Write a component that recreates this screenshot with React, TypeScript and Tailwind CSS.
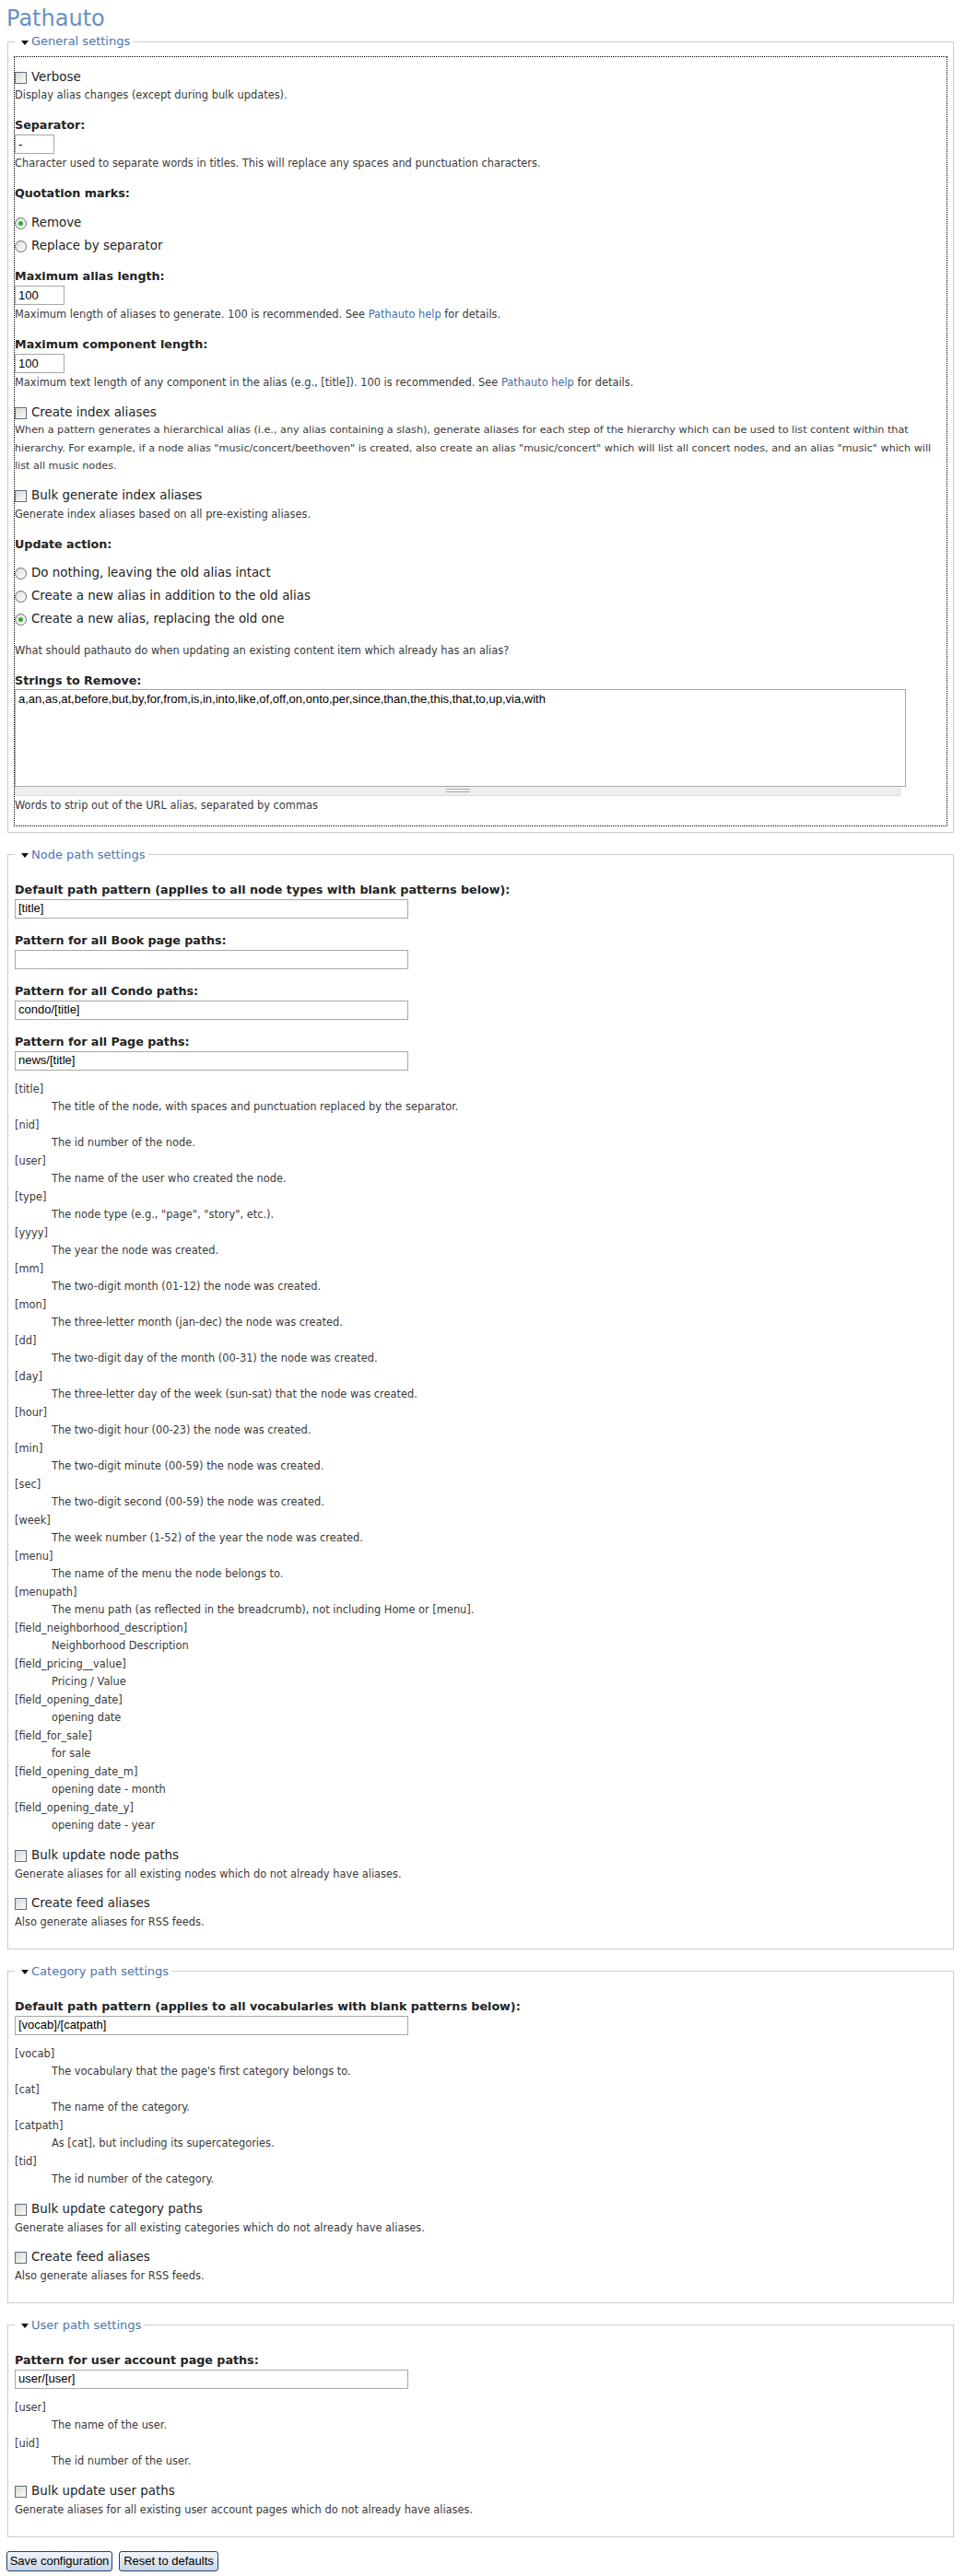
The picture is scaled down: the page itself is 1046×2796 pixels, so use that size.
import React from "react";

const BODY = "font-['DejaVu_Sans',Verdana,sans-serif]";
const ARIAL = "font-['Liberation_Sans',Arial,sans-serif]";

type Token = [string, string];

const nodeTokens: Token[] = [
  ["[title]", "The title of the node, with spaces and punctuation replaced by the separator."],
  ["[nid]", "The id number of the node."],
  ["[user]", "The name of the user who created the node."],
  ["[type]", 'The node type (e.g., "page", "story", etc.).'],
  ["[yyyy]", "The year the node was created."],
  ["[mm]", "The two-digit month (01-12) the node was created."],
  ["[mon]", "The three-letter month (jan-dec) the node was created."],
  ["[dd]", "The two-digit day of the month (00-31) the node was created."],
  ["[day]", "The three-letter day of the week (sun-sat) that the node was created."],
  ["[hour]", "The two-digit hour (00-23) the node was created."],
  ["[min]", "The two-digit minute (00-59) the node was created."],
  ["[sec]", "The two-digit second (00-59) the node was created."],
  ["[week]", "The week number (1-52) of the year the node was created."],
  ["[menu]", "The name of the menu the node belongs to."],
  ["[menupath]", "The menu path (as reflected in the breadcrumb), not including Home or [menu]."],
  ["[field_neighborhood_description]", "Neighborhood Description"],
  ["[field_pricing__value]", "Pricing / Value"],
  ["[field_opening_date]", "opening date"],
  ["[field_for_sale]", "for sale"],
  ["[field_opening_date_m]", "opening date - month"],
  ["[field_opening_date_y]", "opening date - year"],
];

const catTokens: Token[] = [
  ["[vocab]", "The vocabulary that the page's first category belongs to."],
  ["[cat]", "The name of the category."],
  ["[catpath]", "As [cat], but including its supercategories."],
  ["[tid]", "The id number of the category."],
];

const userTokens: Token[] = [
  ["[user]", "The name of the user."],
  ["[uid]", "The id number of the user."],
];

// petit triangle du legend
const Arrow = () => (
  <svg width="8" height="5" viewBox="0 0 8 5" className="mt-[2px]">
    <polygon points="0,0 8,0 4,5" fill="#111" />
  </svg>
);

const Fieldset = ({ title, children }: { title: string; children: React.ReactNode }) => (
  <fieldset className="mx-px border border-[#cccccc] px-[6px] pt-[7px] pb-[6px]">
    <legend className="ml-px pl-[7px] pr-[3px]">
      <span className="flex items-center gap-[3px] h-[18px] text-[13px] leading-[18px] text-[#4a76ae]">
        <Arrow />
        {title}
      </span>
    </legend>
    {children}
  </fieldset>
);

const Desc = ({ children }: { children: React.ReactNode }) => (
  <div className="text-[11.4px] leading-[20px] text-[#3a3a3a]">{children}</div>
);

const Label = ({ children }: { children: React.ReactNode }) => (
  <div className="text-[12.7px] leading-[18px] font-bold text-[#222]">{children}</div>
);

const Checkbox = ({ label }: { label: string }) => (
  <div className="flex items-center h-[18px] gap-[5px] text-[13.4px] text-[#222]">
    <span className="w-[13px] h-[13px] border border-[#5b6f86] bg-gradient-to-br from-[#d9d9d2] to-[#fbfbfb]" />
    {label}
  </div>
);

const Radio = ({ label, checked }: { label: string; checked?: boolean }) => (
  <div className="flex items-center h-[18px] gap-[5px] text-[13.4px] text-[#222]">
    <span className="w-[13px] h-[13px] rounded-full border border-[#5b6f86] bg-gradient-to-br from-[#dcdcd6] to-white flex items-center justify-center">
      {checked && <span className="w-[5px] h-[5px] rounded-full bg-[#2fae2f]" />}
    </span>
    {label}
  </div>
);

const Input = ({ value, w }: { value: string; w: string }) => (
  <div
    className={`mt-px h-[21px] border border-[#a7a7a7] bg-white px-[3px] flex items-center text-[13px] text-black ${ARIAL} ${w}`}
  >
    {value}
  </div>
);

const Tokens = ({ items }: { items: Token[] }) => (
  <dl className="mt-[11px] text-[11.4px] leading-[19.5px] text-[#3a3a3a]">
    {items.map(([t, d]) => (
      <React.Fragment key={t}>
        <dt>{t}</dt>
        <dd className="ml-[40px]">{d}</dd>
      </React.Fragment>
    ))}
  </dl>
);

const Link = ({ children }: { children: React.ReactNode }) => (
  <span className="text-[#3f6fa9]">{children}</span>
);

export default function App() {
  return (
    <div className={`bg-white min-h-[2796px] pl-[7px] pr-[10px] pt-[5px] ${BODY}`}>
      <h1 className="text-[24px] leading-[30px] text-[#6890c6] mb-px">Pathauto</h1>

      {/* Réglages généraux */}
      <Fieldset title="General settings">
        <div className="border border-dotted border-black pb-[12px]">
          <div className="mt-[13px]">
            <Checkbox label="Verbose" />
            <Desc>Display alias changes (except during bulk updates).</Desc>
          </div>
          <div className="mt-[14px]">
            <Label>Separator:</Label>
            <Input value="-" w="w-[43px]" />
            <Desc>Character used to separate words in titles. This will replace any spaces and punctuation characters.</Desc>
          </div>
          <div className="mt-[14px]">
            <Label>Quotation marks:</Label>
            <div className="mt-[14px] flex flex-col gap-[7px]">
              <Radio label="Remove" checked />
              <Radio label="Replace by separator" />
            </div>
          </div>
          <div className="mt-[15px]">
            <Label>Maximum alias length:</Label>
            <Input value="100" w="w-[54px]" />
            <Desc>
              Maximum length of aliases to generate. 100 is recommended. See <Link>Pathauto help</Link> for details.
            </Desc>
          </div>
          <div className="mt-[14px]">
            <Label>Maximum component length:</Label>
            <Input value="100" w="w-[54px]" />
            <Desc>
              Maximum text length of any component in the alias (e.g., [title]). 100 is recommended. See{" "}
              <Link>Pathauto help</Link> for details.
            </Desc>
          </div>
          <div className="mt-[14px]">
            <Checkbox label="Create index aliases" />
            <div className="text-[11.2px] leading-[19.5px] text-[#3a3a3a]">
              When a pattern generates a hierarchical alias (i.e., any alias containing a slash), generate aliases for each
              step of the hierarchy which can be used to list content within that hierarchy. For example, if a node alias
              "music/concert/beethoven" is created, also create an alias "music/concert" which will list all concert nodes,
              and an alias "music" which will list all music nodes.
            </div>
          </div>
          <div className="mt-[14px]">
            <Checkbox label="Bulk generate index aliases" />
            <Desc>Generate index aliases based on all pre-existing aliases.</Desc>
          </div>
          <div className="mt-[14px]">
            <Label>Update action:</Label>
            <div className="mt-[14px] flex flex-col gap-[7px]">
              <Radio label="Do nothing, leaving the old alias intact" />
              <Radio label="Create a new alias in addition to the old alias" />
              <Radio label="Create a new alias, replacing the old one" checked />
            </div>
            <div className="mt-[14px]">
              <Desc>What should pathauto do when updating an existing content item which already has an alias?</Desc>
            </div>
          </div>
          <div className="mt-[14px]">
            <Label>Strings to Remove:</Label>
            <div
              className={`w-[967px] h-[106px] border border-[#a7a7a7] px-[3px] pt-[2px] text-[13px] leading-[16px] text-black ${ARIAL}`}
            >
              a,an,as,at,before,but,by,for,from,is,in,into,like,of,off,on,onto,per,since,than,the,this,that,to,up,via,with
            </div>
            <div className="w-[961px] h-[10px] bg-[#eeeeee] border border-t-0 border-[#dddddd] flex flex-col items-center justify-center gap-[2px]">
              <span className="w-[26px] h-px bg-[#aaaaaa]" />
              <span className="w-[26px] h-px bg-[#aaaaaa]" />
            </div>
            <Desc>Words to strip out of the URL alias, separated by commas</Desc>
          </div>
        </div>
      </Fieldset>

      {/* Chemins des noeuds */}
      <div className="mt-[15px]">
        <Fieldset title="Node path settings">
          <div className="px-px pb-[13px]">
            <div className="mt-[13px]">
              <Label>Default path pattern (applies to all node types with blank patterns below):</Label>
              <Input value="[title]" w="w-[427px]" />
            </div>
            <div className="mt-[15px]">
              <Label>Pattern for all Book page paths:</Label>
              <Input value="" w="w-[427px]" />
            </div>
            <div className="mt-[15px]">
              <Label>Pattern for all Condo paths:</Label>
              <Input value="condo/[title]" w="w-[427px]" />
            </div>
            <div className="mt-[15px]">
              <Label>Pattern for all Page paths:</Label>
              <Input value="news/[title]" w="w-[427px]" />
            </div>
            <Tokens items={nodeTokens} />
            <div className="mt-[14px]">
              <Checkbox label="Bulk update node paths" />
              <Desc>Generate aliases for all existing nodes which do not already have aliases.</Desc>
            </div>
            <div className="mt-[14px]">
              <Checkbox label="Create feed aliases" />
              <Desc>Also generate aliases for RSS feeds.</Desc>
            </div>
          </div>
        </Fieldset>
      </div>

      {/* Chemins des catégories */}
      <div className="mt-[15px]">
        <Fieldset title="Category path settings">
          <div className="px-px pb-[13px]">
            <div className="mt-[13px]">
              <Label>Default path pattern (applies to all vocabularies with blank patterns below):</Label>
              <Input value="[vocab]/[catpath]" w="w-[427px]" />
            </div>
            <Tokens items={catTokens} />
            <div className="mt-[14px]">
              <Checkbox label="Bulk update category paths" />
              <Desc>Generate aliases for all existing categories which do not already have aliases.</Desc>
            </div>
            <div className="mt-[14px]">
              <Checkbox label="Create feed aliases" />
              <Desc>Also generate aliases for RSS feeds.</Desc>
            </div>
          </div>
        </Fieldset>
      </div>

      {/* Chemins des utilisateurs */}
      <div className="mt-[15px]">
        <Fieldset title="User path settings">
          <div className="px-px pb-[13px]">
            <div className="mt-[13px]">
              <Label>Pattern for user account page paths:</Label>
              <Input value="user/[user]" w="w-[427px]" />
            </div>
            <Tokens items={userTokens} />
            <div className="mt-[14px]">
              <Checkbox label="Bulk update user paths" />
              <Desc>Generate aliases for all existing user account pages which do not already have aliases.</Desc>
            </div>
          </div>
        </Fieldset>
      </div>

      <div className="mt-[15px] flex gap-[7px]">
        <button
          className={`h-[22px] w-[115px] rounded-[3px] border border-[#24416b] bg-gradient-to-b from-[#f3f6fb] to-[#c8d6ea] text-[13px] text-black ${ARIAL}`}
        >
          Save configuration
        </button>
        <button
          className={`h-[22px] w-[108px] rounded-[3px] border border-[#24416b] bg-gradient-to-b from-[#f3f6fb] to-[#c8d6ea] text-[13px] text-black ${ARIAL}`}
        >
          Reset to defaults
        </button>
      </div>
    </div>
  );
}
